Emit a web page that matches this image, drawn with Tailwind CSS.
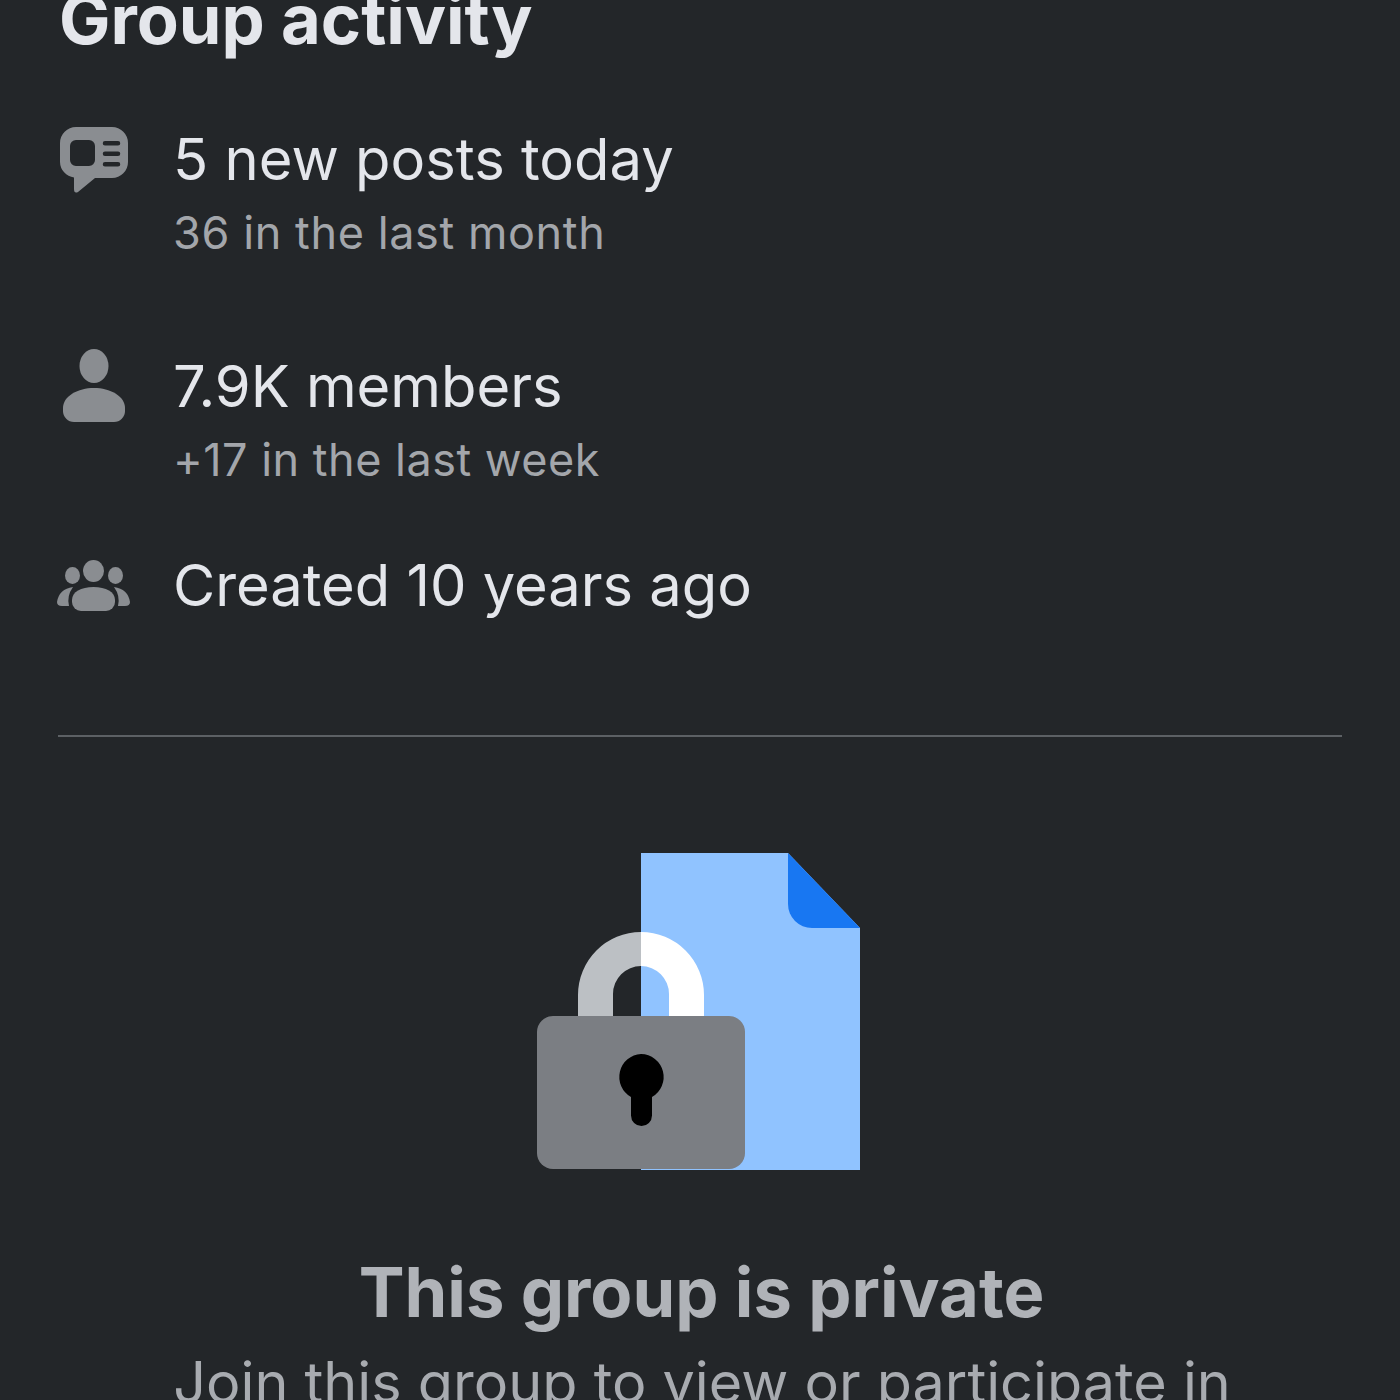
<!DOCTYPE html><html><head><script src="https://cdn.jsdelivr.net/npm/@tailwindcss/browser@4"></script></head>
<body class="bg-[#232629]">
<div class="w-[1400px] h-[1400px] overflow-hidden bg-[#232629] relative font-['Inter',sans-serif]">
<div class="px-[58px] pt-0">
<h2 class="mt-[-18px] h-[76px] pl-[1px] text-[68.6px] leading-[76px] font-bold text-[#e4e6eb] whitespace-nowrap">Group activity</h2>
<div class="mt-[62px] flex h-[227px]">
<div class="w-[72px] flex justify-center shrink-0 pt-[7px]">
<svg class="w-[68px] h-[66px]" viewBox="0 0 68 66"><path fill-rule="evenodd" fill="#8a8d91" d="M16 0H52A16 16 0 0 1 68 16V35A16 16 0 0 1 52 51H35L18 65Q14 67 14 62V50.500A16 16 0 0 1 0 35V16A16 16 0 0 1 16 0ZM16 13A6 6 0 0 0 10 19V33A6 6 0 0 0 16 39H29A6 6 0 0 0 35 33V19A6 6 0 0 0 29 13ZM45 14A2 2 0 0 0 45 18.500H58A2 2 0 0 0 58 14ZM45 24.500A2 2 0 0 0 45 29H58A2 2 0 0 0 58 24.500ZM45 35A2 2 0 0 0 45 39.500H58A2 2 0 0 0 58 35Z"/></svg>
</div>
<div class="ml-[43px] pt-[5px]">
<div class="text-[57.9px] leading-[68px] text-[#e4e6eb]">5 new posts today</div>
<div class="text-[45px] leading-[56px] text-[#a3a6ab] mt-[12px] tracking-[0.6px]">36 in the last month</div>
</div>
</div>
<div class="flex h-[198px]">
<div class="w-[72px] flex justify-center shrink-0 pt-[2px]">
<svg class="w-[62px] h-[73px]" viewBox="0 0 62 73"><ellipse cx="31" cy="17" rx="14.500" ry="17" fill="#8a8d91"/><path fill="#8a8d91" d="M0 59C0 47 15 39 31 39S62 47 62 59V62A11 11 0 0 1 51 73H11A11 11 0 0 1 0 62Z"/></svg>
</div>
<div class="ml-[43px] pt-[5px]">
<div class="text-[57.9px] leading-[68px] text-[#e4e6eb]">7.9K members</div>
<div class="text-[45px] leading-[56px] text-[#a3a6ab] mt-[12px] tracking-[0.5px]">+17 in the last week</div>
</div>
</div>
<div class="flex h-[190px]">
<div class="w-[72px] flex shrink-0 pt-[15px]">
<svg class="w-[73px] h-[51px] shrink-0 ml-[-1px]" viewBox="0 0 73 51" fill="#8a8d91"><ellipse cx="36.500" cy="11" rx="10.500" ry="11"/><ellipse cx="15.500" cy="15.500" rx="7.500" ry="8.500"/><ellipse cx="58.500" cy="15.500" rx="7.500" ry="8.500"/><path d="M15 40C15 32 24 27 36.500 27S58 32 58 40V42A9 9 0 0 1 49 51H24A9 9 0 0 1 15 42Z"/><path d="M16 27Q2 29 0 42Q0 46 5 46H12Q9.500 36 16 27Z"/><path d="M57 27Q71 29 73 42Q73 46 68 46H61Q63.500 36 57 27Z"/></svg>
</div>
<div class="ml-[43px] pt-[6px] text-[57.8px] leading-[68px] text-[#e4e6eb]">Created 10 years ago</div>
</div>
<div class="h-[2px] bg-[#5c6064]"></div>
<div class="flex justify-center mt-[115px] h-[318px]">
<svg class="w-[324px] h-[318px] ml-[-2px]" viewBox="0 0 324 318"><path fill="#90c3ff" d="M104 1H251L323 76V318H104Z"/><path fill="#1877f2" d="M251 1L323 76H275A24 24 0 0 1 251 52Z"/><path fill="#bcc0c4" d="M41 170V143A63 63 0 0 1 104 80V114A28 28 0 0 0 76 142V170Z"/><path fill="#fff" d="M104 80A63 63 0 0 1 167 143V170H132V142A28 28 0 0 0 104 114Z"/><rect x="0" y="164" width="208" height="153" rx="16" fill="#7b7e83"/><path fill="#000" d="M104 202A23 23 0 0 1 115 245V263.500A10.500 10.500 0 0 1 94 263.500V245A23 23 0 0 1 104 202Z"/></svg>
</div>
<div class="text-center pl-[3px] text-[68.7px] leading-[80px] font-bold text-[#b0b3b8] mt-[82px] whitespace-nowrap">This group is private</div>
<div class="text-center pl-[4px] text-[57.5px] leading-[68px] text-[#a8abb0] mt-[16px] whitespace-nowrap">Join this group to view or participate in</div>
</div>
</div>
</body></html>
